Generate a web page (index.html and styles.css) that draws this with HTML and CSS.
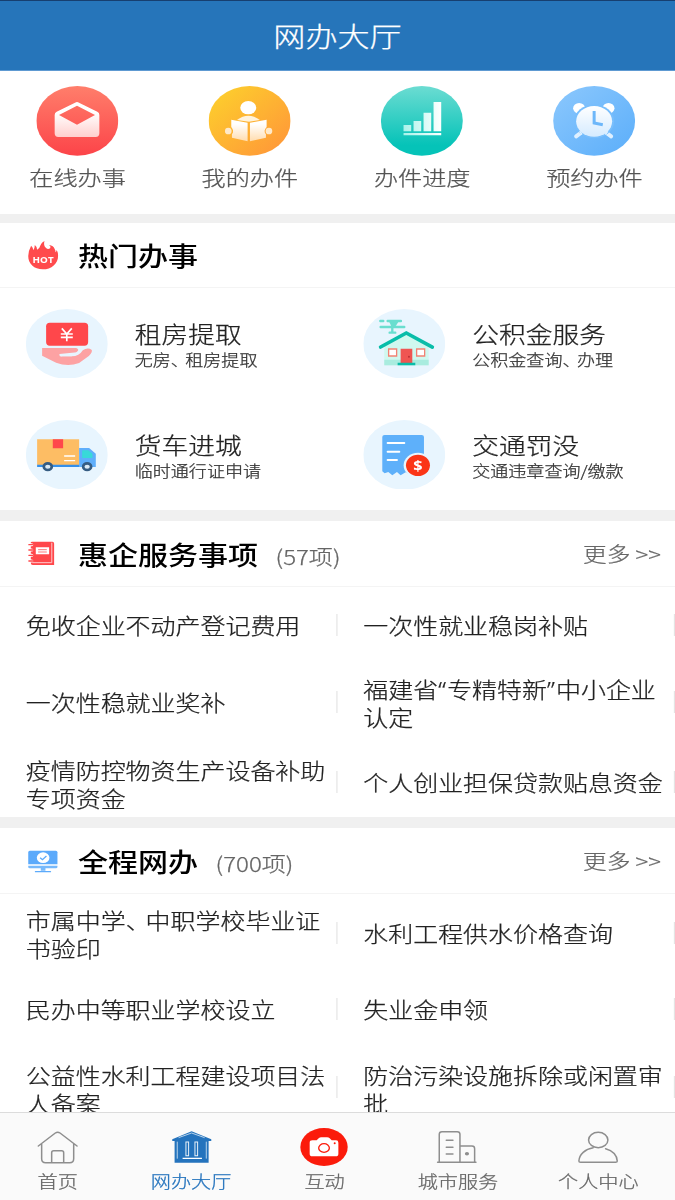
FILE: index.html
```html
<!DOCTYPE html>
<html lang="zh-CN">
<head>
<meta charset="utf-8">
<title>网办大厅</title>
<link rel="stylesheet" href="styles.css">
</head>
<body>
<div class="screen">
  <header class="topbar"><h1 class="topbar-title">网办大厅</h1></header>

  <main class="content">
    <section class="quick">
      <a class="quick-item">
        <svg class="badge" viewBox="110 258 246 209" preserveAspectRatio="none">
          <defs>
            <linearGradient id="red" x1="0" y1="0" x2="0" y2="1"><stop offset="0" stop-color="#ff7e6b"/><stop offset="1" stop-color="#fc4449"/></linearGradient>
            <linearGradient id="fadeRed" x1="0" y1="0" x2="0" y2="1"><stop offset="0.3" stop-color="#fff"/><stop offset="1" stop-color="#ffcfcd"/></linearGradient>
          </defs>
          <ellipse cx="233" cy="362.500" rx="123" ry="104.500" fill="url(#red)"/>
          <path d="M165 345Q165 338 171 335L226 308Q232 304 238 308L293 335Q299 338 299 345V400Q299 411 288 411H176Q165 411 165 400ZM178 345L232 374L286 345L232 317Z" fill="url(#fadeRed)" fill-rule="evenodd"/>
        </svg>
        <span class="quick-label">在线办事</span>
      </a>
      <a class="quick-item">
        <svg class="badge" viewBox="627 258 246 209" preserveAspectRatio="none">
          <defs>
            <linearGradient id="gold" x1="0" y1="0" x2="1" y2="1"><stop offset="0.1" stop-color="#fdcd2d"/><stop offset="0.9" stop-color="#ff9938"/></linearGradient>
            <linearGradient id="fadeGold" x1="0" y1="0" x2="0" y2="1"><stop offset="0.2" stop-color="#fff"/><stop offset="1" stop-color="#ffdcae"/></linearGradient>
          </defs>
          <ellipse cx="750" cy="362.500" rx="123" ry="104.500" fill="url(#gold)"/>
          <ellipse cx="746" cy="323" rx="24" ry="20" fill="#fff"/>
          <path d="M712 360Q746 334 781 360L748 365Z" fill="#fff3dc"/>
          <path d="M695 359L744 368V424L697 413V403Q705 393 695 381ZM751 368L801 359V381Q790 393 799 403V413L751 424Z" fill="url(#fadeGold)"/>
          <ellipse cx="686" cy="393" rx="10" ry="10" fill="#ffe9c9"/><ellipse cx="808" cy="393" rx="10" ry="10" fill="#ffe9c9"/>
        </svg>
        <span class="quick-label">我的办件</span>
      </a>
      <a class="quick-item">
        <svg class="badge" viewBox="139 258 246 209" preserveAspectRatio="none">
          <defs>
            <linearGradient id="teal" x1="0" y1="0" x2="0" y2="1"><stop offset="0" stop-color="#6cdcd2"/><stop offset="0.850" stop-color="#05c3b8"/></linearGradient>
            <linearGradient id="bars" x1="0" y1="0" x2="1" y2="0"><stop offset="0" stop-color="#a9f3ea"/><stop offset="1" stop-color="#fff"/></linearGradient>
          </defs>
          <ellipse cx="262" cy="362.500" rx="123" ry="104.500" fill="url(#teal)"/>
          <path d="M207 375H230V394H207ZM237 363H260V394H237ZM267 338H290V394H267ZM297 306H320V394H297ZM207 399H320V406H207Z" fill="url(#bars)"/>
        </svg>
        <span class="quick-label">办件进度</span>
      </a>
      <a class="quick-item">
        <svg class="badge" viewBox="657 258 246 209" preserveAspectRatio="none">
          <defs>
            <linearGradient id="sky" x1="0" y1="0" x2="1" y2="1"><stop offset="0" stop-color="#8cc8fd"/><stop offset="1" stop-color="#5baefa"/></linearGradient>
            <linearGradient id="fadeSky" x1="0" y1="0" x2="0" y2="1"><stop offset="0" stop-color="#fff"/><stop offset="1" stop-color="#d5ebff"/></linearGradient>
          </defs>
          <ellipse cx="780" cy="362.500" rx="123" ry="104.500" fill="url(#sky)"/>
          <ellipse cx="735" cy="325" rx="18" ry="16" fill="#fff"/><ellipse cx="823" cy="325" rx="18" ry="16" fill="#fff"/>
          <path d="M742 397L726 409M815 397L831 409" stroke="#dff0ff" stroke-width="12" stroke-linecap="round"/>
          <ellipse cx="780" cy="364" rx="60" ry="51" fill="#78befc"/>
          <path d="M742 397L738 400M815 397L819 400" stroke="#dff0ff" stroke-width="12"/>
          <ellipse cx="780" cy="364" rx="54" ry="46" fill="url(#fadeSky)"/>
          <path d="M780 333V369L806 374" fill="none" stroke="#6db7fa" stroke-width="9"/>
        </svg>
        <span class="quick-label">预约办件</span>
      </a>
    </section>

    <section class="card hot">
      <div class="card-head">
        <svg class="head-icon" viewBox="84 61 90 90" preserveAspectRatio="none">
          <path d="M93 78Q99 83 99 92Q104 88 104 76Q111 81 111 90Q119 86 121 77Q124 68 133 64Q129 78 138 85Q143 91 150 86Q154 81 147 76Q160 77 164 89Q168 95 165 98Q169 97 170 91Q174 99 174 108C174 132 154 149 128 149S84 132 84 109Q84 95 93 78Z" fill="#ff4b4d"/>
          <text x="129" y="129" class="hot-text" textLength="63" lengthAdjust="spacingAndGlyphs">HOT</text>
        </svg>
        <h2 class="card-title">热门办事</h2>
      </div>
      <div class="services">
        <a class="service">
          <svg class="badge" viewBox="77 265 246 209" preserveAspectRatio="none">
            <ellipse cx="200" cy="369.500" rx="123" ry="104.500" fill="#e8f5fe"/>
            <rect x="138" y="306" width="126" height="69" rx="11" fill="#ff474b"/>
            <path d="M185 323L200 340L215 323M200 340V362M182 340H218M182 350H218" fill="none" stroke="#fff" stroke-width="5"/>
            <path d="M126 382H228Q239 386 231 395L178 400Q177 408 187 407H215Q237 407 248 389Q263 379 275 388Q277 395 266 406L237 427Q203 440 168 426L126 405Z" fill="#fda2a3"/>
            <path d="M179 404H214Q229 402 238 389" fill="none" stroke="#e8f5fe" stroke-width="5"/>
          </svg>
          <span class="service-text"><b class="service-name">租房提取</b><span class="service-note">无房<i class="comma">、</i>租房提取</span></span>
        </a>
        <a class="service">
          <svg class="badge" viewBox="85 265 246 209" preserveAspectRatio="none">
            <ellipse cx="208" cy="369.500" rx="123" ry="104.500" fill="#e8f5fe"/>
            <path d="M148 377L214 341L281 377V434H148Z" fill="#d0f8ef"/>
            <path d="M148 417H281V434H148Z" fill="#a9ecdf"/>
            <path d="M137 379L214 337L292 379" fill="none" stroke="#09bda9" stroke-width="11" stroke-linecap="round"/>
            <path d="M136 301H145M158 301H198M137 319H208M172 303V335M164 336H181" fill="none" stroke="#69decf" stroke-width="7" stroke-linecap="round"/>
            <path d="M163 304H190L182 317H169Z" fill="#69decf"/>
            <path d="M161 385H185V406H161ZM245 385H269V406H245Z" fill="#fff" stroke="#f28274" stroke-width="4"/>
            <path d="M197 384H232V428H197Z" fill="#ef5552"/><circle cx="222" cy="408" r="3" fill="#bd2f34"/>
            <path d="M188 426H241V434H188Z" fill="#09bda9"/>
          </svg>
          <span class="service-text"><b class="service-name">公积金服务</b><span class="service-note">公积金查询<i class="comma">、</i>办理</span></span>
        </a>
        <a class="service">
          <svg class="badge" viewBox="77 597 246 209" preserveAspectRatio="none">
            <ellipse cx="200" cy="701.500" rx="123" ry="104.500" fill="#e8f5fe"/>
            <path d="M111 655H237V732H111Z" fill="#fdbd64"/><path d="M158 655H189V682H158Z" fill="#ff474b"/>
            <path d="M237 681H267L287 698V738H237Z" fill="#5eaefb"/>
            <path d="M111 731H237V738H111Z" fill="#358fe9"/>
            <path d="M246 711V688H264L277 698V711Z" fill="#38d9d8"/>
            <path d="M192 705H225M192 719H225" stroke="#fff" stroke-width="4"/>
            <g fill="#dbe9f3" stroke="#355c82" stroke-width="8"><ellipse cx="143" cy="737" rx="12" ry="10"/><ellipse cx="261" cy="737" rx="12" ry="10"/></g>
          </svg>
          <span class="service-text"><b class="service-name">货车进城</b><span class="service-note">临时通行证申请</span></span>
        </a>
        <a class="service">
          <svg class="badge" viewBox="85 597 246 209" preserveAspectRatio="none">
            <ellipse cx="208" cy="701.500" rx="123" ry="104.500" fill="#e8f5fe"/>
            <path d="M142 648Q142 642 149 642H260Q267 642 267 648V758L256 761L243 753L228 763L212 754L197 763L186 753L172 763L160 753L149 757L142 751Z" fill="#5eb0fa"/>
            <path d="M158 666H208M158 692H193M158 717H186" stroke="#fff" stroke-width="6" stroke-linecap="round"/>
            <ellipse cx="249" cy="733" rx="43" ry="38" fill="#e8f5fe"/><ellipse cx="249" cy="733" rx="36" ry="32" fill="#fb3517"/>
            <text x="249" y="749" class="coin-text" textLength="28" lengthAdjust="spacingAndGlyphs">$</text>
          </svg>
          <span class="service-text"><b class="service-name">交通罚没</b><span class="service-note">交通违章查询/缴款</span></span>
        </a>
      </div>
    </section>

    <section class="card benefits">
      <div class="card-head">
        <svg class="head-icon" viewBox="84 88 90 90" preserveAspectRatio="none">
          <path d="M92 98Q92 96 96 96H157Q162 96 162 102V166H98Q92 166 92 160Z" fill="#ff474b"/>
          <path d="M97 159H155V99" fill="none" stroke="#ffc9ca" stroke-width="3"/>
          <path d="M107 113H147V134H107Z" fill="#fff"/><path d="M114 120H140M114 127H140" stroke="#ff7679" stroke-width="3"/>
          <path d="M84 105H95M84 121H95M84 137H95M84 154H95" stroke="#fff" stroke-width="9" stroke-linecap="round"/>
          <path d="M86 105H98M86 121H98M86 137H98M86 154H98" stroke="#ff474b" stroke-width="4" stroke-linecap="round"/>
        </svg>
        <h2 class="card-title">惠企服务事项</h2><span class="count">(57项)</span><a class="more">更多 &gt;&gt;</a>
      </div>
      <div class="items">
        <a class="item"><span class="item-text">免收企业不动产登记费用</span></a>
        <a class="item"><span class="item-text">一次性就业稳岗补贴</span></a>
        <a class="item"><span class="item-text">一次性稳就业奖补</span></a>
        <a class="item"><span class="item-text two">福建省<i class="quote">“</i>专精特新<i class="quote">”</i>中小企业认定</span></a>
        <a class="item"><span class="item-text two">疫情防控物资生产设备补助专项资金</span></a>
        <a class="item"><span class="item-text">个人创业担保贷款贴息资金</span></a>
      </div>
    </section>

    <section class="card online">
      <div class="card-head">
        <svg class="head-icon" viewBox="84 76 90 90" preserveAspectRatio="none">
          <path d="M84 95Q84 90 89 90H167Q172 90 172 95V131H84Z" fill="#5caafb"/>
          <path d="M84 135H172V139Q172 143 167 143H89Q84 143 84 139ZM122 143H136V150H122Z" fill="#77b9fb"/>
          <path d="M106 153H151" stroke="#5caafb" stroke-width="4" stroke-linecap="round"/>
          <ellipse cx="129" cy="111" rx="19" ry="16" fill="#fff"/><path d="M120 111L127 117L139 106" fill="none" stroke="#5caafb" stroke-width="4"/>
        </svg>
        <h2 class="card-title">全程网办</h2><span class="count">(700项)</span><a class="more">更多 &gt;&gt;</a>
      </div>
      <div class="items">
        <a class="item"><span class="item-text two">市属中学<i class="comma">、</i>中职学校毕业证书验印</span></a>
        <a class="item"><span class="item-text">水利工程供水价格查询</span></a>
        <a class="item"><span class="item-text">民办中等职业学校设立</span></a>
        <a class="item"><span class="item-text">失业金申领</span></a>
        <a class="item"><span class="item-text two">公益性水利工程建设项目法人备案</span></a>
        <a class="item"><span class="item-text two">防治污染设施拆除或闲置审批</span></a>
      </div>
    </section>
  </main>

  <nav class="tabs">
    <a class="tab">
      <svg class="tab-icon" viewBox="101 81 144 117" preserveAspectRatio="none" fill="none" stroke="#8e8e8e" stroke-width="4.500" stroke-linecap="round" stroke-linejoin="round">
        <path d="M114 138L165 99Q172 94 179 99L230 138M124 133V176Q124 188 136 188H208Q220 188 220 176V133M154 187V158Q154 152 160 152H184Q190 152 190 158V187"/>
      </svg><span>首页</span>
    </a>
    <a class="tab active">
      <svg class="tab-icon" viewBox="501 81 144 117" preserveAspectRatio="none">
        <path d="M515 118L573 94L632 118V123H624V188H522V123H515Z" fill="#2473bd"/>
        <path d="M534 113L573 99L612 113M530 125V176M617 125V176" fill="none" stroke="#d3e4f3" stroke-width="2.500"/>
        <path d="M556 126H564V167H556ZM583 126H591V167H583Z" fill="none" stroke="#e8f1f9" stroke-width="3"/>
        <path d="M546 175H604" stroke="#fff" stroke-width="4"/>
      </svg><span>网办大厅</span>
    </a>
    <a class="tab">
      <svg class="tab-icon" viewBox="901 81 144 117" preserveAspectRatio="none">
        <ellipse cx="973" cy="141" rx="71" ry="57" fill="#fb1b0b"/>
        <path d="M930 128Q930 121 938 121H951L957 115Q960 112 965 112H982Q987 112 990 115L996 121H1009Q1016 121 1016 128V161Q1016 169 1008 169H938Q930 169 930 161Z" fill="#fff"/>
        <ellipse cx="973" cy="144" rx="16" ry="13" fill="none" stroke="#fb1b0b" stroke-width="4"/><circle cx="1005" cy="130" r="3" fill="#fb1b0b"/>
      </svg><span>互动</span>
    </a>
    <a class="tab">
      <svg class="tab-icon" viewBox="296 81 144 117" preserveAspectRatio="none" fill="none" stroke="#8e8e8e" stroke-width="4.500" stroke-linecap="round">
        <path d="M308 187H423M313 186V103Q313 95 321 95H367Q375 95 375 103V186M376 138H411Q419 138 419 146V186M334 121H354M334 142H354M334 162H354"/>
        <ellipse cx="396" cy="161" rx="4" ry="3" fill="#8e8e8e"/>
      </svg><span>城市服务</span>
    </a>
    <a class="tab last">
      <svg class="tab-icon" viewBox="719 81 144 117" preserveAspectRatio="none" fill="none" stroke="#8e8e8e" stroke-width="4.500" stroke-linecap="round">
        <ellipse cx="791" cy="120" rx="29" ry="23"/>
        <path d="M776 143C752 147 734 163 733 183Q733 187 738 187H843Q848 187 848 183C847 166 834 152 813 146"/>
      </svg><span>个人中心</span>
    </a>
  </nav>
</div>
</body>
</html>
```

FILE: styles.css
```css
* { box-sizing: border-box; }

body {
  margin: 0;
  width: 675px;
  height: 1200px;
  overflow: hidden;
  background: #fff;
}

/* The interface uses a 576px wide layout, widened to the window. */
.screen {
  display: flex;
  flex-direction: column;
  width: 576px;
  height: 1200px;
  transform: scaleX(1.171875);
  transform-origin: 0 0;
  font-family: "Noto Sans CJK SC", sans-serif;
  font-weight: 300;
  -webkit-text-stroke: 0.25px currentColor;
  color: #222;
}

h1, h2 { margin: 0; font-weight: inherit; }
i { font-style: normal; }
svg { display: block; flex: none; -webkit-text-stroke: 0; }

.topbar {
  flex: none;
  display: flex;
  align-items: center;
  justify-content: center;
  height: 71px;
  padding-bottom: 2px;
  background: #2675ba;
  border-top: 1px solid #173f70;
  border-bottom: 1px solid #5e9ad2;
}
.topbar-title { font-size: 27.4px; line-height: 40px; color: #fff; }

.content { flex: 1; min-height: 0; overflow: hidden; }

.quick {
  display: flex;
  justify-content: space-between;
  height: 143px;
  padding: 15px 27.5px 0 25px;
}
.quick-item { display: flex; flex-direction: column; align-items: center; }
.badge { width: 70px; height: 69.7px; flex: none; }
.quick-label { margin-top: 6px; font-size: 20.6px; line-height: 30px; color: #555; }

.card { border-top: 10px solid #f0f0f0; }
.hot { border-top-width: 9px; }
.benefits, .online { border-top-width: 11px; }

.card-head {
  display: flex;
  align-items: center;
  height: 65px;
  padding: 0 12px 0 24px;
  border-bottom: 1px solid #f4f4f4;
}
.benefits .card-head, .online .card-head { height: 66px; padding-top: 1px; }
.head-icon { width: 25.6px; height: 30px; }
.card-title {
  margin-left: 17px;
  font-size: 25.6px;
  line-height: 36px;
  font-weight: 500;
  -webkit-text-stroke: 0;
  color: #000;
}
.count { margin: 3px 0 0 15px; font-size: 20.5px; line-height: 30px; color: #666; }
.more { margin-left: auto; font-size: 20.2px; line-height: 30px; color: #666; }

.hot-text {
  font: 700 27px "Open Sans", sans-serif;
  fill: #fff;
  text-anchor: middle;
}
.coin-text {
  font: 700 44px "Open Sans", sans-serif;
  fill: #fff;
  text-anchor: middle;
}

.services {
  display: grid;
  grid-template-columns: 288px 288px;
  grid-template-rows: 111px 111px;
  height: 222px;
}
.service { display: flex; align-items: center; padding-left: 22px; }
.service-text { display: flex; flex-direction: column; margin-left: 23px; padding-top: 3px; }
.service-name { font-size: 22.8px; line-height: 28px; font-weight: 300; }
.service-note { font-size: 15.4px; line-height: 23px; color: #333; }
.comma { letter-spacing: -0.2em; }
.quote { font-family: "Noto Sans", sans-serif; line-height: 1; margin-right: 1px; }

.items { display: grid; grid-template-columns: 288px 288px; }
.benefits .items { grid-template-rows: 76px 77px 77px; }
.benefits .item:nth-child(n+5) { padding-top: 7px; }
.online .items { grid-template-rows: 77px 76px 80px; }
.item { display: flex; align-items: center; padding-left: 22px; }
.item::after {
  content: "";
  width: 1px;
  height: 22px;
  margin-left: auto;
  background: #e4e4e4;
}
.item-text { width: 258px; font-size: 21.3px; line-height: 28px; }
.two { padding-top: 3px; }

.tabs {
  flex: none;
  display: flex;
  gap: 62.3px;
  height: 88px;
  padding: 14px 0 0 32px;
  background: #fafafa;
  border-top: 1px solid #dcdcdc;
}
.tab {
  display: flex;
  flex-direction: column;
  align-items: center;
  font-size: 17.2px;
  line-height: 26px;
  color: #666;
}
.tab.active { color: #2473bd; }
.tab.last { margin-left: -11.3px; }
.tab-icon { width: 41px; height: 39px; margin: 0 -4px 2px; }
```
